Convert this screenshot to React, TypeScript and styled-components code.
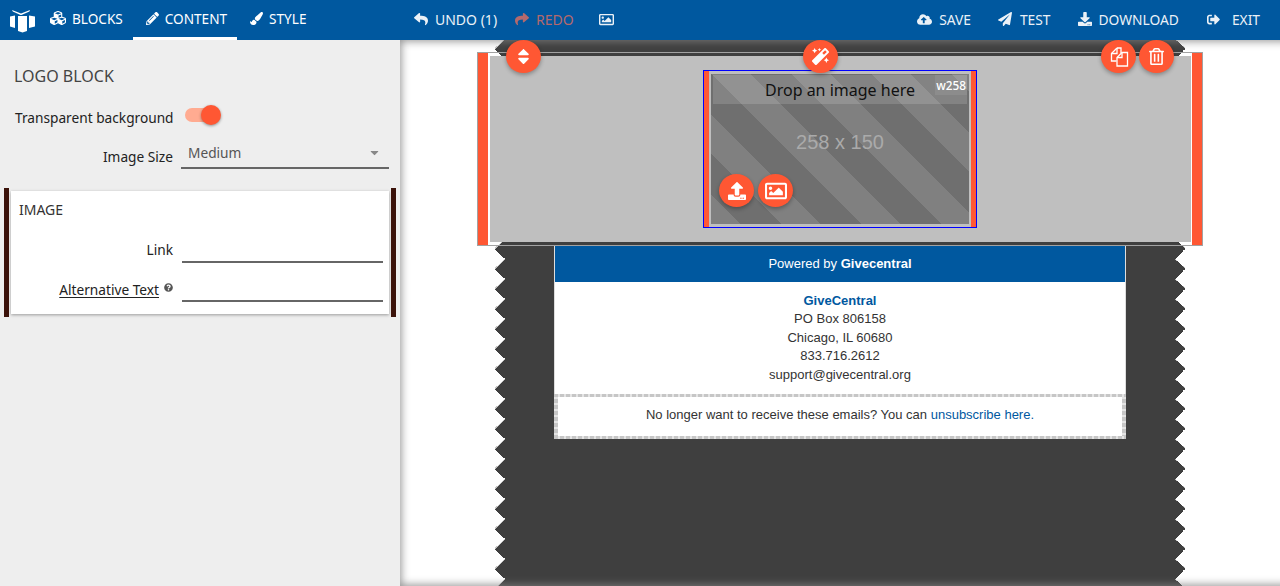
import React from 'react';
import styled, { createGlobalStyle } from 'styled-components';
import {
  FaCubes,
  FaPencilAlt,
  FaPaintBrush,
  FaReply,
  FaShare,
  FaRegImage,
  FaCloudUploadAlt,
  FaPaperPlane,
  FaDownload,
  FaSignOutAlt,
  FaSort,
  FaMagic,
  FaRegTrashAlt,
  FaUpload,
  FaQuestionCircle,
  FaCaretDown,
} from 'react-icons/fa';

const ORANGE = '#ff5733';
const BLUE = '#00589f';
const WALL = '#3f3f3f';
const DASH_H = 'repeating-linear-gradient(90deg, #c6c6c6 0 4px, #e4e4e4 4px 6px)';
const DASH_V = 'repeating-linear-gradient(0deg, #c6c6c6 0 4px, #e4e4e4 4px 6px)';

const GlobalStyle = createGlobalStyle`
  html, body {
    margin: 0;
    height: 100%;
    overflow: hidden;
    background: #fff;
  }
  body {
    font-family: "Noto Sans", "Open Sans", sans-serif;
  }
`;

const Page = styled.div`
  display: flex;
  flex-direction: column;
  height: 586px;
  overflow: hidden;
`;

const TopBar = styled.header`
  position: relative;
  z-index: 3;
  display: flex;
  align-items: stretch;
  flex: 0 0 40px;
  background: ${BLUE};
  color: #fff;
`;

const LeftNav = styled.nav`
  display: flex;
  flex: 0 0 414px;
`;

const LogoSlot = styled.div`
  display: flex;
  align-items: center;
  flex: 0 0 37px;
  padding: 2px 0 0 9px;
  box-sizing: border-box;
`;

const Tab = styled.div<{ $active?: boolean }>`
  display: flex;
  align-items: center;
  gap: 6px;
  padding: 0 10px 1px 13px;
  font-size: 13.6px;
  box-sizing: border-box;
  border-bottom: 3px solid ${(p) => (p.$active ? '#fff' : 'transparent')};
`;

const ActionGroup = styled.div<{ $end?: boolean }>`
  display: flex;
  align-items: center;
  padding-bottom: 2px;
  ${(p) => (p.$end ? 'margin-left: auto; padding-right: 20px; gap: 27px; font-size: 13.8px;' : 'font-size: 14px;')}
`;

const Action = styled.div<{ $disabled?: boolean; $gap?: number; $after?: number }>`
  display: flex;
  align-items: center;
  gap: ${(p) => p.$gap ?? 7}px;
  margin-right: ${(p) => p.$after ?? 0}px;
  color: ${(p) => (p.$disabled ? '#b4696c' : '#fff')};
  opacity: ${(p) => (p.$disabled ? 1 : 0.92)};
`;

const Body = styled.div`
  display: flex;
  flex: 1;
  min-height: 0;
`;

const Sidebar = styled.aside`
  flex: 0 0 400px;
  background: #eee;
  color: #222;
  font-size: 13.7px;
`;

const PanelTitle = styled.h2`
  margin: 25px 0 0 14px;
  font-size: 16px;
  line-height: 22px;
  font-weight: 400;
  color: #444;
`;

const FieldRow = styled.div<{ $top: number; $label: number }>`
  display: grid;
  grid-template-columns: ${(p) => p.$label}px 1fr;
  column-gap: 8px;
  align-items: center;
  margin-top: ${(p) => p.$top}px;
  height: 24px;
`;

const FieldLabel = styled.label`
  text-align: right;
  white-space: nowrap;
`;

const HintLabel = styled(FieldLabel)`
  display: flex;
  justify-content: flex-end;
  align-items: center;
  gap: 5px;
  u {
    text-underline-offset: 2px;
  }
  svg {
    color: #555;
    margin: -6px 0 0;
  }
`;

const SidebarFields = styled.div`
  margin: 0 11px 0 15px;
`;

const Toggle = styled.div`
  position: relative;
  width: 30px;
  height: 14px;
  margin: -4px 0 0 4px;
  border-radius: 7px;
  background: #ffab91;
`;

const ToggleThumb = styled.span`
  position: absolute;
  top: -3px;
  left: 16px;
  width: 20px;
  height: 20px;
  border-radius: 50%;
  background: ${ORANGE};
  box-shadow: 0 1px 3px rgba(0, 0, 0, 0.4);
`;

const SelectBox = styled.div`
  display: flex;
  justify-content: space-between;
  align-items: center;
  align-self: start;
  height: 26px;
  margin-top: -1px;
  padding: 0 8px 6px 7px;
  box-sizing: border-box;
  border-bottom: 2px solid #666;
  color: #555;
  svg {
    color: #888;
  }
`;

const Card = styled.section`
  display: flex;
  height: 129px;
  margin: 20px 4px 0;
`;

const CardEdge = styled.div`
  flex: 0 0 5px;
  background: #3b120a;
`;

const CardBody = styled.div`
  flex: 1;
  margin: 3px 2px;
  padding-top: 10px;
  background: #fff;
  box-shadow: 0 1px 3px rgba(0, 0, 0, 0.35);
`;

const CardTitle = styled.h3`
  margin: 0 0 0 8px;
  height: 20px;
  font-size: 14px;
  line-height: 18px;
  font-weight: 400;
  color: #333;
`;

const CardRow = styled.div<{ $top: number }>`
  display: grid;
  grid-template-columns: 162px 201px;
  column-gap: 9px;
  align-items: end;
  height: 24px;
  margin-top: ${(p) => p.$top}px;
`;

const RowText = styled.div`
  height: 24px;
  line-height: 22px;
  text-align: right;
  white-space: nowrap;
`;

const TextInput = styled.div`
  height: 24px;
  box-sizing: border-box;
  border-bottom: 2px solid #666;
`;

const Stage = styled.main`
  position: relative;
  flex: 1;
  display: flex;
  justify-content: center;
  overflow: hidden;
  background: #fff;
  &::after {
    content: '';
    position: absolute;
    inset: 0 -20px 0 0;
    z-index: 1;
    pointer-events: none;
    box-shadow: inset 0 0 8px 1px rgba(130, 130, 130, 0.9);
  }
`;

const Wall = styled.div`
  display: flex;
  flex-direction: column;
  align-items: center;
  width: 690px;
  padding-top: 12px;
  box-sizing: border-box;
  background:
    conic-gradient(from 225deg at 100% 50%, #c4c4c4 0 4deg, #fff 4deg 90deg, ${WALL} 90deg 360deg) left 0 top 9px / 10px 20px repeat-y,
    conic-gradient(from 45deg at 0 50%, #fff 0 86deg, #c4c4c4 86deg 90deg, ${WALL} 90deg 360deg) right 0 top 9px / 10px 20px repeat-y,
    linear-gradient(${WALL}, ${WALL}) center / 670px 100% no-repeat;
`;

const BlockFrame = styled.div`
  position: relative;
  z-index: 2;
  display: flex;
  flex: 0 0 194px;
  width: 726px;
  margin: 0 -18px;
  box-sizing: border-box;
  border: 1px solid #a2a2a2;
`;

const FrameBar = styled.div`
  flex: 0 0 10px;
  background: ${ORANGE};
`;

const BlockFill = styled.div`
  flex: 1;
  display: flex;
  justify-content: center;
  align-items: center;
  margin: 3px 1px 3px 2px;
  background: #bfbfbf;
`;

const ToolRow = styled.div`
  position: absolute;
  top: -13px;
  left: 28px;
  right: 28px;
  display: flex;
  justify-content: space-between;
`;

const ToolGroup = styled.div`
  display: flex;
  gap: 3px;
`;

const RoundButton = styled.button`
  display: flex;
  align-items: center;
  justify-content: center;
  width: 35px;
  height: 33px;
  padding: 0;
  border: 0;
  border-radius: 50%;
  background: ${ORANGE};
  color: #fff;
  box-shadow: 0 2px 4px rgba(0, 0, 0, 0.3);
`;

const WandButton = styled(RoundButton)`
  margin-right: 2px;
`;

const ImageSlot = styled.div`
  display: flex;
  align-items: center;
  width: 274px;
  height: 158px;
  margin-right: 1px;
  padding: 3px 0;
  box-sizing: border-box;
  border: 1px solid #0000ff;
  background: #bfbfbf;
`;

const SlotBar = styled.div`
  align-self: stretch;
  flex: 0 0 5px;
  margin: -3px 0;
  background: ${ORANGE};
`;

const Placeholder = styled.div`
  position: relative;
  flex: 0 0 258px;
  height: 150px;
  margin: 0 2px;
  background: repeating-linear-gradient(
    45deg,
    #808080 0 21.2px,
    #6f6f6f 21.2px 49.5px,
    #808080 49.5px 56.57px
  );
`;

const DropBar = styled.div`
  height: 29px;
  margin: 1px 2px 0;
  background: rgba(255, 255, 255, 0.14);
  color: #111;
  font-size: 16px;
  line-height: 30px;
  text-align: center;
`;

const WidthTag = styled.span`
  position: absolute;
  top: 1px;
  right: 2px;
  padding: 0 1px;
  background: rgba(255, 255, 255, 0.08);
  color: #fff;
  font-size: 11.8px;
  font-weight: 500;
  line-height: 20px;
`;

const Dimensions = styled.div`
  margin-top: 26px;
  color: #aaa;
  font: 20px/24px "Liberation Sans", Arial, sans-serif;
  text-align: center;
`;

const ImageTools = styled.div`
  position: absolute;
  left: 8px;
  bottom: 17px;
  display: flex;
  gap: 4px;
`;

const Footer = styled.footer`
  width: 572px;
  box-sizing: border-box;
  border: 1px solid #ddd;
  border-top: 0;
  background: #fff;
  color: #333;
  font: 13px/18.4px "Liberation Sans", Arial, sans-serif;
  text-align: center;
`;

const PoweredBy = styled.div`
  height: 36px;
  background: #00589f;
  color: #fff;
  line-height: 35px;
`;

const Address = styled.address`
  padding: 10px 0 9.5px;
  font-style: normal;
`;

const OrgName = styled.strong`
  display: block;
  color: #00589f;
`;

const Unsubscribe = styled.div`
  height: 45px;
  margin: 0 -1px -1px;
  box-sizing: border-box;
  background:
    ${DASH_H} top / 100% 3px no-repeat,
    ${DASH_H} bottom / 100% 3px no-repeat,
    ${DASH_V} left / 4px 100% no-repeat,
    ${DASH_V} right / 4px 100% no-repeat,
    #fff;
  line-height: 41px;
`;

const UnsubLink = styled.a`
  color: #00589f;
`;

const GiftLogo = () => (
  <svg width="26" height="24" viewBox="0 0 26 24" fill="#fff" aria-hidden="true">
    <path d="M3 1 L12 4.6 L21 1 L20.4 2.4 L12.5 6 L11.5 6 L3.8 2.4 Z" />
    <path d="M1 7.5 L6 6.5 L6 19 L1 17.5 Z" />
    <path d="M9 7 L18 7 L18 22 L13.5 23.5 L9 22 Z" />
    <path d="M20 6.5 L26 7.5 L26 17.5 L20 19 Z" />
  </svg>
);

const CopyIcon = () => (
  <svg width="20" height="20" viewBox="0 0 20 20" fill="none" stroke="#fff" strokeWidth="1.3" aria-hidden="true">
    <path d="M8 1 L12 1 L12 6 M8 1 L2.5 6.5 L2.5 14 L7.5 14" />
    <path d="M2.5 6.5 L8 6.5 L8 1" />
    <path d="M13 5.5 L18.5 5.5 L18.5 19 L8 19 L8 10.5 Z" fill={ORANGE} />
    <path d="M8 10.5 L13 10.5 L13 5.5" />
  </svg>
);

const App: React.FC = () => {
  return (
    <Page>
      <GlobalStyle />
      <TopBar>
        <LeftNav>
          <LogoSlot>
            <GiftLogo />
          </LogoSlot>
          <Tab>
            <FaCubes size={16} />
            BLOCKS
          </Tab>
          <Tab $active>
            <FaPencilAlt size={13} />
            CONTENT
          </Tab>
          <Tab>
            <FaPaintBrush size={13} />
            STYLE
          </Tab>
        </LeftNav>
        <ActionGroup>
          <Action $after={18}>
            <FaReply size={14} />
            UNDO (1)
          </Action>
          <Action $disabled $after={25}>
            <FaShare size={14} />
            REDO
          </Action>
          <Action>
            <FaRegImage size={15} />
          </Action>
        </ActionGroup>
        <ActionGroup $end>
          <Action>
            <FaCloudUploadAlt size={15} />
            SAVE
          </Action>
          <Action $gap={8}>
            <FaPaperPlane size={14} />
            TEST
          </Action>
          <Action $after={1}>
            <FaDownload size={14} />
            DOWNLOAD
          </Action>
          <Action $gap={12}>
            <FaSignOutAlt size={13} />
            EXIT
          </Action>
        </ActionGroup>
      </TopBar>
      <Body>
        <Sidebar>
          <PanelTitle>LOGO BLOCK</PanelTitle>
          <SidebarFields>
            <FieldRow $top={18} $label={158}>
              <FieldLabel>Transparent background</FieldLabel>
              <Toggle>
                <ToggleThumb />
              </Toggle>
            </FieldRow>
            <FieldRow $top={15} $label={158}>
              <FieldLabel>Image Size</FieldLabel>
              <SelectBox>
                Medium
                <FaCaretDown size={13} />
              </SelectBox>
            </FieldRow>
          </SidebarFields>
          <Card>
            <CardEdge />
            <CardBody>
              <CardTitle>IMAGE</CardTitle>
              <CardRow $top={18}>
                <RowText>Link</RowText>
                <TextInput />
              </CardRow>
              <CardRow $top={15}>
                <RowText as={HintLabel}>
                  <u>Alternative Text</u>
                  <FaQuestionCircle size={9} />
                </RowText>
                <TextInput />
              </CardRow>
            </CardBody>
            <CardEdge />
          </Card>
        </Sidebar>
        <Stage>
          <Wall>
            <BlockFrame>
              <FrameBar />
              <BlockFill>
                <ImageSlot>
                  <SlotBar />
                  <Placeholder>
                    <DropBar>Drop an image here</DropBar>
                    <WidthTag>w258</WidthTag>
                    <Dimensions>258 x 150</Dimensions>
                    <ImageTools>
                      <RoundButton>
                        <FaUpload size={18} />
                      </RoundButton>
                      <RoundButton>
                        <FaRegImage size={22} />
                      </RoundButton>
                    </ImageTools>
                  </Placeholder>
                  <SlotBar />
                </ImageSlot>
              </BlockFill>
              <FrameBar />
              <ToolRow>
                <RoundButton>
                  <FaSort size={19} />
                </RoundButton>
                <WandButton>
                  <FaMagic size={17} />
                </WandButton>
                <ToolGroup>
                  <RoundButton>
                    <CopyIcon />
                  </RoundButton>
                  <RoundButton>
                    <FaRegTrashAlt size={17} />
                  </RoundButton>
                </ToolGroup>
              </ToolRow>
            </BlockFrame>
            <Footer>
              <PoweredBy>
                Powered by <strong>Givecentral</strong>
              </PoweredBy>
              <Address>
                <OrgName>GiveCentral</OrgName>
                PO Box 806158
                <br />
                Chicago, IL 60680
                <br />
                833.716.2612
                <br />
                support@givecentral.org
              </Address>
              <Unsubscribe>
                No longer want to receive these emails? You can <UnsubLink>unsubscribe here.</UnsubLink>
              </Unsubscribe>
            </Footer>
          </Wall>
        </Stage>
      </Body>
    </Page>
  );
};

export default App;
